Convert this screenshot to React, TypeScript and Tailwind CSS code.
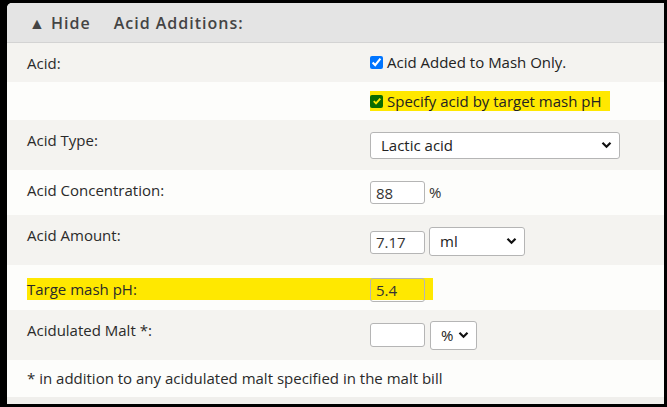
import React from 'react';

const Chevron = () => (
  <svg width="11" height="8" viewBox="0 0 11 8" className="pointer-events-none absolute right-[8px] top-1/2 -translate-y-1/2">
    <path d="M1.5 1.8 L5.5 5.8 L9.5 1.8" fill="none" stroke="#111" strokeWidth="2.2" />
  </svg>
);

function Select({ value, className }: { value: string; className: string }) {
  return (
    <div className={`relative ${className}`}>
      <select
        defaultValue={value}
        className="h-full w-full appearance-none rounded-[3px] border border-[#b5b5b5] bg-white pl-[10px] text-[15px] text-[#222] outline-none"
      >
        <option>{value}</option>
      </select>
      <Chevron />
    </div>
  );
}

function Row({
  label,
  bg,
  h,
  children,
}: {
  label?: string;
  bg: string;
  h: string;
  children?: React.ReactNode;
}) {
  return (
    <div className={`flex ${bg} ${h}`}>
      <div className="w-[363px] shrink-0 pl-[20px] pt-[8px]">
        <span className="text-[15px] leading-[20px] text-[#2a2a2a]">{label}</span>
      </div>
      <div className="flex flex-1 items-center">{children}</div>
    </div>
  );
}

export default function App() {
  return (
    <div className="h-[407px] w-[667px] bg-black pb-[3px] pl-[7px] pr-[3px] pt-[3px]">
      <div className="flex h-full flex-col overflow-hidden rounded-tl-[5px] bg-[#fdfdfb] font-['Open_Sans',sans-serif]">
        <div className="flex h-[40px] shrink-0 items-center border-b border-[#d3d3d3] bg-[#e4e4e4] pl-[22px] text-[16px] font-semibold tracking-[1px] text-[#444]">
          <span>▲ Hide</span>
          <span className="ml-[23px]">Acid Additions:</span>
        </div>

        <Row label="Acid:" bg="bg-[#f4f3f0]" h="h-[39px]">
          <label className="flex items-center gap-[4px] text-[15px] text-[#222]">
            <input type="checkbox" defaultChecked className="m-0 h-[13px] w-[13px]" />
            Acid Added to Mash Only.
          </label>
        </Row>

        <Row bg="bg-[#fdfdfb]" h="h-[38px]">
          <div className="flex h-[20px] w-[240px] items-center gap-[4px] bg-[#ffe800] text-[15px] text-[#222]">
            <span className="flex h-[13px] w-[13px] items-center justify-center rounded-[2px] bg-[#0b6b00]">
              <svg width="10" height="10" viewBox="0 0 10 10">
                <path d="M1.8 5.2 L4 7.4 L8.3 2.6" fill="none" stroke="#ffe800" strokeWidth="1.9" />
              </svg>
            </span>
            Specify acid by target mash pH
          </div>
        </Row>

        <Row label="Acid Type:" bg="bg-[#f4f3f0]" h="h-[50px]">
          <Select value="Lactic acid" className="h-[27px] w-[250px]" />
        </Row>

        <Row label="Acid Concentration:" bg="bg-[#fdfdfb]" h="h-[45px]">
          <input
            defaultValue="88"
            className="h-[23px] w-[55px] rounded-[3px] border border-[#b5b5b5] bg-white px-[5px] text-[15px] text-[#333] outline-none"
          />
          <span className="ml-[4px] text-[15px] text-[#333]">%</span>
        </Row>

        <Row label="Acid Amount:" bg="bg-[#f4f3f0]" h="h-[50px]">
          <input
            defaultValue="7.17"
            className="mt-[4px] h-[23px] w-[55px] rounded-[3px] border border-[#b5b5b5] bg-white px-[5px] text-[15px] text-[#333] outline-none"
          />
          <Select value="ml" className="ml-[4px] mt-[2px] h-[29px] w-[96px]" />
        </Row>

        <div className="flex h-[45px] bg-[#fdfdfb]">
          <div className="ml-[20px] mt-[13px] flex h-[22px] self-start">
            <div className="h-full w-[343px] bg-[#ffe800] text-[15px] leading-[22px] text-[#2a2a2a]">Targe mash pH:</div>
            <div className="h-full w-[63px] bg-[#ffe800]">
              <input
                defaultValue="5.4"
                className="-mt-[1px] h-[24px] w-[55px] rounded-[3px] border border-[#b5b5b5] bg-transparent px-[5px] text-[15px] text-[#333] outline-none"
              />
            </div>
          </div>
        </div>

        <Row label="Acidulated Malt *:" bg="bg-[#f4f3f0]" h="h-[50px]">
          <input className="h-[24px] w-[55px] rounded-[3px] border border-[#b5b5b5] bg-white px-[5px] text-[15px] outline-none" />
          <Select value="%" className="ml-[5px] h-[29px] w-[47px]" />
        </Row>

        <div className="flex h-[37px] items-center bg-[#fdfdfb] pl-[20px] text-[15px] text-[#2a2a2a]">
          * in addition to any acidulated malt specified in the malt bill
        </div>
        <div className="flex-1 bg-[#f0efec]" />
      </div>
    </div>
  );
}
